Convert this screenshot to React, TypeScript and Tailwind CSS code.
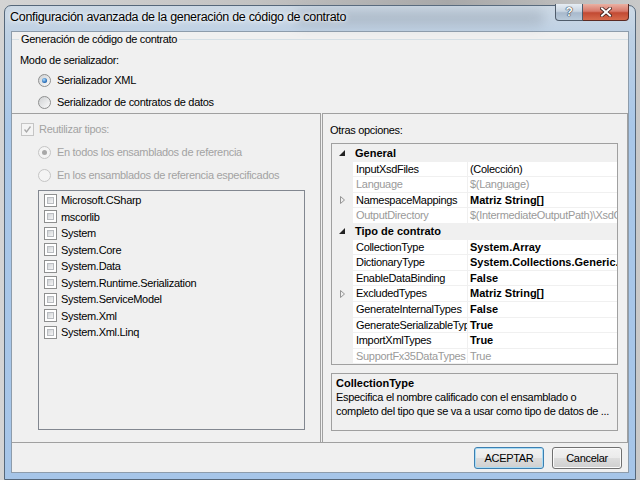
import clsx from 'clsx';

type Row = {
  name: string;
  value?: string;
  cat?: boolean;
  bold?: boolean;
  ro?: boolean;
  exp?: boolean;
};

const rows: Row[] = [
  { name: 'General', cat: true },
  { name: 'InputXsdFiles', value: '(Colección)' },
  { name: 'Language', value: '$(Language)', ro: true },
  { name: 'NamespaceMappings', value: 'Matriz String[]', bold: true, exp: true },
  { name: 'OutputDirectory', value: '$(IntermediateOutputPath)\\XsdGeneratedCode', ro: true },
  { name: 'Tipo de contrato', cat: true },
  { name: 'CollectionType', value: 'System.Array', bold: true },
  { name: 'DictionaryType', value: 'System.Collections.Generic.Dictionary`2', bold: true },
  { name: 'EnableDataBinding', value: 'False', bold: true },
  { name: 'ExcludedTypes', value: 'Matriz String[]', bold: true, exp: true },
  { name: 'GenerateInternalTypes', value: 'False', bold: true },
  { name: 'GenerateSerializableTypes', value: 'True', bold: true },
  { name: 'ImportXmlTypes', value: 'True', bold: true },
  { name: 'SupportFx35DataTypes', value: 'True', ro: true },
];

const assemblies = [
  'Microsoft.CSharp',
  'mscorlib',
  'System',
  'System.Core',
  'System.Data',
  'System.Runtime.Serialization',
  'System.ServiceModel',
  'System.Xml',
  'System.Xml.Linq',
];

function Radio({ checked, disabled }: { checked?: boolean; disabled?: boolean }) {
  return (
    <span
      className={clsx(
        'flex h-[13px] w-[13px] shrink-0 items-center justify-center rounded-full border',
        disabled
          ? 'border-[#c5c5c5] bg-[#f4f4f4]'
          : 'border-[#8e8f8f] bg-[linear-gradient(135deg,#cfd1d3,#fbfbfb)]'
      )}
    >
      {checked && (
        <span
          className={clsx(
            'h-[5px] w-[5px] rounded-full',
            disabled
              ? 'bg-[#a8a8a8]'
              : 'bg-[radial-gradient(circle_at_40%_35%,#a9dcff,#1d62b0_70%,#0d3b78)]'
          )}
        />
      )}
    </span>
  );
}

function Check({ checked, disabled }: { checked?: boolean; disabled?: boolean }) {
  return (
    <span
      className={clsx(
        'relative flex h-[13px] w-[13px] shrink-0 items-center justify-center border p-[2px]',
        disabled ? 'border-[#c5c5c5] bg-[#f4f4f4]' : 'border-[#8e8f8f] bg-white'
      )}
    >
      {!disabled && (
        <span className="h-full w-full border border-[#b9bcc0] bg-[linear-gradient(135deg,#d0d3d6,#f6f6f6)]" />
      )}
      {checked && (
        <svg viewBox="0 0 11 11" className="absolute left-0 top-0 h-[11px] w-[11px]">
          <path d="M2.5 5.5 L4.5 8 L8.5 2.5" fill="none" stroke={disabled ? '#a8a8a8' : '#333'} strokeWidth="1.3" />
        </svg>
      )}
    </span>
  );
}

function Button({ label, primary }: { label: string; primary?: boolean }) {
  return (
    <div
      className={clsx(
        'flex h-[22px] w-[70px] items-center justify-center rounded-[3px] border bg-[linear-gradient(#f2f2f2_0%,#ebebeb_48%,#dddddd_52%,#cfcfcf_100%)]',
        primary
          ? 'border-[#3c7fb1] shadow-[inset_0_0_0_1px_#a9dcf5]'
          : 'border-[#707070] shadow-[inset_0_0_0_1px_#fbfbfb]'
      )}
    >
      {label}
    </div>
  );
}

function GridRow({ row }: { row: Row }) {
  if (row.cat) {
    return (
      <div className="flex h-[14.6px] items-center">
        <div className="flex w-[20px] justify-center">
          <svg viewBox="0 0 6 6" className="h-[6px] w-[6px]">
            <path d="M6 0 L6 6 L0 6 Z" fill="#222" />
          </svg>
        </div>
        <span className="pl-[3px] font-bold tracking-normal text-black">{row.name}</span>
      </div>
    );
  }
  return (
    <div className={clsx('flex h-[14.6px] items-stretch gap-px', row.ro ? 'text-[#9a9a9a]' : 'text-black')}>
      <div className="flex w-[20px] items-center justify-center">
        {row.exp && (
          <svg viewBox="0 0 5 8" className="h-[8px] w-[5px]">
            <path d="M0.5 0.5 L4.5 4 L0.5 7.5 Z" fill="none" stroke="#8a8a8a" strokeWidth="0.9" />
          </svg>
        )}
      </div>
      <div className="flex w-[114px] items-center overflow-hidden whitespace-nowrap bg-white pl-[3px]">
        <span className="whitespace-nowrap">{row.name}</span>
      </div>
      <div
        className={clsx(
          'flex flex-1 items-center overflow-hidden whitespace-nowrap bg-white pl-[2px]',
          row.bold && 'font-bold tracking-normal'
        )}
      >
        <span className="whitespace-nowrap">{row.value}</span>
      </div>
    </div>
  );
}

export default function App() {
  return (
    <div
      className="h-[480px] w-[640px] overflow-hidden bg-[linear-gradient(90deg,#d4d4d4,#c2c2c2_40%,#a9a9a9_70%,#c9c9c9)] px-[4px] pt-[5px] font-['Liberation_Sans',Arial,sans-serif] text-[11px] tracking-[-0.3px] text-black"
    >
      {/* window */}
      <div className="relative flex h-[475px] flex-col rounded-t-[7px] border border-[#55677a] bg-[linear-gradient(180deg,#cdd9e5_0px,#bdd0e4_30px,#a9c7e8_120px,#a6c5e8_100%)] px-[6px]">
        {/* title bar */}
        <div className="relative -mx-[6px] flex h-[25px] items-center pb-[3px] pl-[5px]">
          <div className="pointer-events-none absolute left-[290px] top-[4px] h-[16px] w-[250px] rounded-full bg-[#8d99a6] opacity-40 blur-[6px]" />
          <span className="relative text-[12.5px] tracking-[-0.3px] text-black [text-shadow:0_0_6px_#ffffff,0_0_3px_#ffffff]">
            Configuración avanzada de la generación de código de contrato
          </span>
          <div className="absolute right-[6px] top-[-2px] flex h-[17px]">
            <div className="flex w-[28px] items-center justify-center rounded-bl-[4px] border border-t-0 border-[#4f5c6b] bg-[linear-gradient(#e6edf4_0%,#c9d5e2_45%,#a8b9cc_55%,#b9cada_100%)] text-[12px] font-bold text-white [text-shadow:0_0_1px_#2b3440,0_0_1px_#2b3440,0_0_1px_#2b3440]">
              ?
            </div>
            <div className="flex w-[46px] items-center justify-center rounded-br-[4px] border border-l-0 border-t-0 border-[#5a2a24] bg-[linear-gradient(#eab0a2_0%,#d8796a_45%,#c24a33_55%,#d76a4c_100%)]">
              <svg viewBox="0 0 12 10" className="h-[10px] w-[12px]">
                <path d="M2 1.5 L10 8.5 M10 1.5 L2 8.5" stroke="#3b1c18" strokeWidth="3.6" strokeLinecap="square" />
                <path d="M2 1.5 L10 8.5 M10 1.5 L2 8.5" stroke="#ffffff" strokeWidth="2" strokeLinecap="square" />
              </svg>
            </div>
          </div>
        </div>

        {/* client area */}
        <div className="flex h-[442px] flex-col border border-[#8d9cab] bg-[#f0f0f0]">
          <div className="flex flex-col border-b border-[#a0a0a0]">
            <div className="flex h-[14px] items-center">
              <span className="h-px w-[7px] bg-[#d5dfe5]" />
              <span className="px-[2px]">Generación de código de contrato</span>
              <span className="h-px flex-1 bg-[#d5dfe5]" />
            </div>
            <div className="mt-[7px] flex h-[14px] items-center pl-[8px]">Modo de serializador:</div>
            <div className="mt-[6px] flex h-[14px] items-center gap-[6px] pl-[26px]">
              <Radio checked />
              <span>Serializador XML</span>
            </div>
            <div className="mt-[8px] flex h-[14px] items-center gap-[6px] pl-[26px]">
              <Radio />
              <span>Serializador de contratos de datos</span>
            </div>

            <div className="mt-[4px] flex h-[329px] gap-px">
              {/* left pane */}
              <div className="flex w-[309px] flex-col border-r border-t border-[#a0a0a0] text-[#a3a3a3]">
                <div className="mt-[8px] flex h-[14px] items-center gap-[5px] pl-[9px]">
                  <Check checked disabled />
                  <span>Reutilizar tipos:</span>
                </div>
                <div className="mt-[9px] flex h-[14px] items-center gap-[6px] pl-[26px]">
                  <Radio checked disabled />
                  <span>En todos los ensamblados de referencia</span>
                </div>
                <div className="mt-[9px] flex h-[14px] items-center gap-[6px] pl-[26px]">
                  <Radio disabled />
                  <span>En los ensamblados de referencia especificados</span>
                </div>
                <div className="ml-[26px] mt-[8px] h-[240px] w-[267px] border border-[#828790] bg-[#f0f0f0] pt-[1px] text-black">
                  {assemblies.map((a) => (
                    <div key={a} className="flex h-[16.5px] items-center gap-[4px] pl-[5px]">
                      <Check />
                      <span>{a}</span>
                    </div>
                  ))}
                </div>
              </div>

              {/* right pane */}
              <div className="flex w-[306px] flex-col border-l border-r border-t border-[#a0a0a0]">
                <div className="mt-[9px] flex h-[14px] items-center pl-[7px]">Otras opciones:</div>
                <div className="ml-[8px] mt-[6px] h-[222px] w-[287px] overflow-hidden border border-[#a0a0a0] bg-[#f0f0f0] pt-[2px]">
                  <div className="flex flex-col gap-px">
                    {rows.map((r) => (
                      <GridRow key={r.name} row={r} />
                    ))}
                  </div>
                </div>
                <div className="ml-[8px] mt-[8px] h-[58px] w-[287px] border border-[#a0a0a0] bg-[#f0f0f0] pl-[4px] pt-[2px] leading-[14px]">
                  <div className="font-bold tracking-normal">CollectionType</div>
                  <div>Especifica el nombre calificado con el ensamblado o</div>
                  <div>completo del tipo que se va a usar como tipo de datos de ...</div>
                </div>
              </div>
            </div>
          </div>

          {/* buttons */}
          <div className="flex justify-end gap-[8px] pr-[6px] pt-[4px]">
            <Button label="ACEPTAR" primary />
            <Button label="Cancelar" />
          </div>
        </div>
      </div>
    </div>
  );
}
